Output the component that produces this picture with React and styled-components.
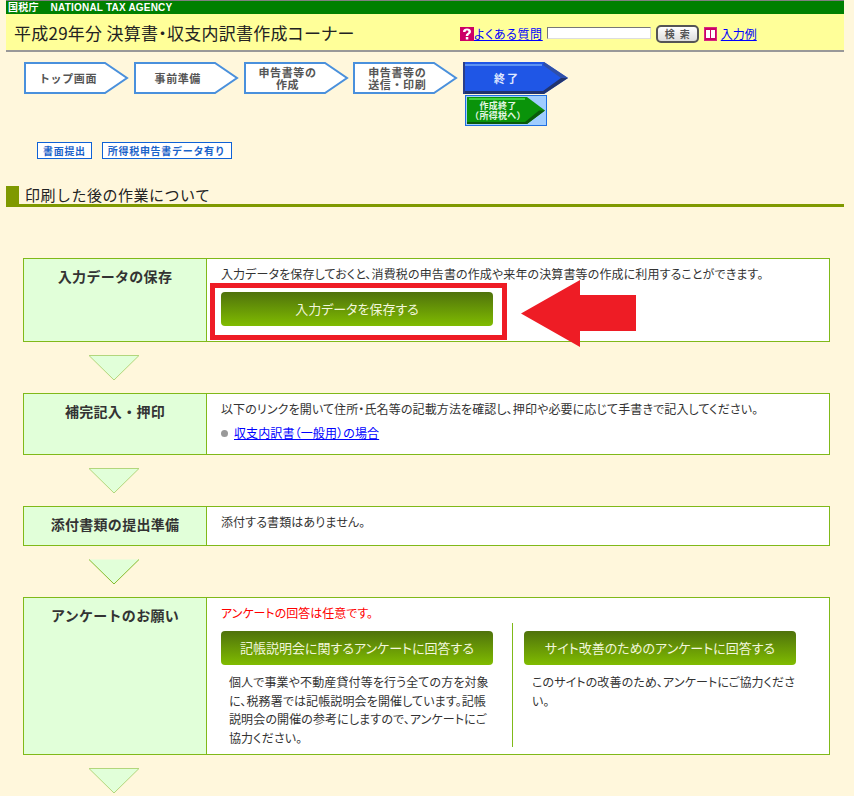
import React from 'react';
import styled, { createGlobalStyle } from 'styled-components';

const GlobalStyle = createGlobalStyle`
  html, body {
    margin: 0;
    padding: 0;
    background: #fff7dc;
  }
  body {
    font-family: "Noto Sans CJK JP", "Liberation Sans", sans-serif;
    color: #333;
    font-size: 12px;
  }
  a {
    color: #0000ff;
  }
`;

const Page = styled.div`
  width: 854px;
  height: 796px;
  overflow: hidden;
  box-sizing: border-box;
  padding-left: 6px;
  padding-right: 10px;
  font-feature-settings: "palt";
`;

const AgencyBar = styled.div`
  height: 13px;
  border-top: 1px solid #808080;
  background: #008000;
  color: #fff;
  font-size: 10px;
  font-weight: 700;
  line-height: 13px;
  letter-spacing: 0.2px;
  display: flex;
  gap: 12px;
  padding-left: 2px;
  font-family: "Liberation Sans", "Noto Sans CJK JP", sans-serif;
  font-feature-settings: normal;
`;

const TitleBar = styled.div`
  height: 36px;
  background: #ffff99;
  border-bottom: 2px solid #999;
  display: flex;
  align-items: center;
`;

const Title = styled.h1`
  margin: 0 0 0 8px;
  width: 446px;
  font-size: 17px;
  font-weight: 400;
  letter-spacing: 0.25px;
  color: #222;
  white-space: nowrap;
`;

const Tools = styled.div`
  display: flex;
  align-items: center;
  margin-top: 4px;
  font-size: 12px;
`;

const HelpLink = styled.a`
  margin-top: -2px;
  text-decoration: underline;
  white-space: nowrap;
  letter-spacing: ${p => p.$spacing || 0}px;
`;

const SearchBox = styled.input`
  width: 102px;
  height: 10px;
  margin: -2px 5px 0 4px;
  padding: 0;
  border: 1px solid;
  border-color: #777 #ddd #ddd #777;
  background: #fff;
`;

const SearchButton = styled.button`
  width: 43px;
  height: 18px;
  padding: 0 0 0 5px;
  margin-right: 5px;
  border: 2px solid #555;
  border-radius: 5px;
  background: linear-gradient(#fff, #ddd);
  color: #555;
  font-family: inherit;
  font-size: 10px;
  font-weight: 700;
  letter-spacing: 5px;
  line-height: 12px;
`;

const StepNav = styled.nav`
  display: grid;
  grid-template-columns: repeat(5, 105px);
  column-gap: 4.75px;
  padding: 10px 0 0 18px;
  height: 64px;
`;

const StepColumn = styled.div`
  display: flex;
  flex-direction: column;
  align-items: flex-start;
`;

const StepLabel = styled.span`
  position: absolute;
  left: 0;
  top: 0;
  width: ${p => p.$width}px;
  height: 100%;
  display: flex;
  align-items: center;
  justify-content: center;
  text-align: center;
  font-size: ${p => p.$size || 11}px;
  line-height: ${p => p.$leading || 12}px;
  font-weight: 700;
  letter-spacing: ${p => p.$spacing ?? 0.6}px;
  color: ${p => p.$color || '#555'};
  font-feature-settings: normal;
`;

const StepShape = styled.div`
  position: relative;
  width: ${p => p.$width}px;
  height: ${p => p.$height}px;
  flex: none;
`;

const ShapeSvg = styled.svg`
  display: block;
`;

function Step({ children }) {
  return (
    <StepShape $width={105} $height={32}>
      <ShapeSvg width="105" height="32" viewBox="0 0 105 32">
        <path d="M1 1H81L103 16L81 31H1Z" fill="#fff" stroke="#4a90dc" strokeWidth="2" />
      </ShapeSvg>
      <StepLabel $width={88}>{children}</StepLabel>
    </StepShape>
  );
}

function CurrentStep() {
  return (
    <StepShape $width={105} $height={32}>
      <ShapeSvg width="105" height="32" viewBox="0 0 105 32">
        <path d="M0 0H81L105 16L81 32H0Z" fill="#1f56e6" />
        <path d="M81 32L105 16L98 16L80 29H0V32Z" fill="#22346e" />
        <path d="M81 0L105 16L98 16L80 3Z" fill="#2f4fa8" />
        <path d="M2 2H79V4H2Z" fill="#5c92f2" />
        <path d="M0 0H2V32H0Z" fill="#2a3f8a" />
      </ShapeSvg>
      <StepLabel $width={88} $color="#dfe8ff" $spacing={2}>終了</StepLabel>
    </StepShape>
  );
}

const SubStepFrame = styled(StepShape)`
  margin-left: 2px;
  margin-top: 1px;
  box-sizing: border-box;
  border: 1px solid #1f6fe0;
  background: #a0cdff;
`;

function SubStep() {
  return (
    <SubStepFrame $width={82} $height={31}>
      <ShapeSvg width="80" height="29" viewBox="0 0 80 29">
        <path d="M1 1H61L79 14.5L61 28H1Z" fill="#0a930a" />
        <path d="M61 28L79 14.5L73 14.5L59 26H1V28Z" fill="#0a5a0a" />
        <path d="M3 2H59V4H3Z" fill="#3fd23f" />
      </ShapeSvg>
      <StepLabel $width={64} $size={9} $leading={10} $color="#e4f6e4" $spacing={0.3}>
        作成終了<br />（所得税へ）
      </StepLabel>
    </SubStepFrame>
  );
}

const TagRow = styled.div`
  display: flex;
  gap: 10px;
  padding: 16px 0 0 31px;
`;

const Tag = styled.span`
  height: 15px;
  padding: 0 5px;
  border: 1px solid #0f62d6;
  background: #fff;
  color: #1b63c9;
  font-size: 10px;
  font-weight: 700;
  line-height: 15px;
  letter-spacing: 0.7px;
  font-feature-settings: normal;
`;

const SectionHeading = styled.h2`
  margin: 27px 0 0;
  height: 18px;
  border-left: 13px solid #7f9900;
  border-bottom: 3px solid #7f9900;
  padding-left: 6px;
  font-size: 15px;
  font-weight: 400;
  line-height: 17px;
  letter-spacing: 0.5px;
  color: #222;
  font-feature-settings: normal;
`;

const Flow = styled.div`
  margin: 51px 0 0 17px;
  width: 807px;
  display: flex;
  flex-direction: column;
`;

const Card = styled.section`
  display: grid;
  grid-template-columns: 183px 1fr;
  min-height: ${p => p.$height}px;
  box-sizing: border-box;
  border: 1px solid #80b919;
  background: #fff;
`;

const CardLabel = styled.h3`
  margin: 0;
  padding-top: 7px;
  background: #e1ffd9;
  border-right: 1px solid #80b919;
  text-align: center;
  font-size: 14px;
  line-height: 20px;
  font-weight: 700;
  letter-spacing: 0.3px;
  color: #333;
  font-feature-settings: normal;
`;

const CardBody = styled.div`
  position: relative;
  padding: 6px 14px 0;
  line-height: 18px;
  letter-spacing: 0.12px;
`;

const Notice = styled.p`
  margin: 0 0 1px;
  color: #f00;
  letter-spacing: 0;
`;

const Paragraph = styled.p`
  margin: 0;
`;

const GreenButton = styled.a`
  display: flex;
  align-items: center;
  justify-content: center;
  width: 272px;
  height: 34px;
  border-radius: 4px;
  background: linear-gradient(#4f720c, #80bc00);
  color: #f2f7dc;
  font-size: 13px;
  letter-spacing: 0;
  text-decoration: none;
  white-space: nowrap;
`;

const HighlightBox = styled.div`
  position: absolute;
  left: 3px;
  top: 24px;
  width: 297px;
  height: 57px;
  box-sizing: border-box;
  border: 5px solid #ee1c25;
`;

const SaveButton = styled(GreenButton)`
  margin-top: 9px;
`;

const RedArrow = styled.svg`
  position: absolute;
  left: 314px;
  top: 21px;
`;

const LinkRow = styled.div`
  display: flex;
  align-items: center;
  gap: 6px;
  margin-top: 6px;
`;

const Bullet = styled.span`
  width: 7px;
  height: 7px;
  border-radius: 50%;
  background: #999;
`;

const SurveyGrid = styled.div`
  display: grid;
  grid-template-columns: 292px 1fr;
`;

const SurveyColumn = styled.div`
  box-sizing: border-box;
  height: 124px;
  padding: 8px 0 0 ${p => p.$indent}px;
  ${p => p.$divided && 'border-right: 1px solid #80b919;'}
`;

const SurveyText = styled.p`
  margin: 8px 0 0;
  padding-left: 8px;
  width: 264px;
  line-height: 18.6px;
`;

const ArrowSlot = styled.div`
  height: 26px;
  padding: 13px 0 12px 65px;
  svg {
    display: block;
  }
`;

function DownArrow({ strong, open }) {
  return (
    <ArrowSlot>
      <svg width="52" height="26" viewBox="0 0 52 26">
        <path d="M1 0.5H51L26 25Z" fill="#e1ffd9" stroke="none" />
        <path
          d={open ? 'M1 0.5L26 25L51 0.5' : 'M1 0.5H51L26 25Z'}
          fill="none"
          stroke={strong ? '#86bb2e' : '#b2d67c'}
          strokeWidth="1"
        />
      </svg>
    </ArrowSlot>
  );
}

const IconSvg = styled.svg`
  flex: none;
  margin-right: ${p => p.$gap || 0}px;
`;

const QuestionIcon = () => (
  <IconSvg width="14" height="14" viewBox="0 0 14 14">
    <rect width="14" height="14" fill="#cc0066" />
    <path d="M3 5C3 2.3 4.8 1.5 7 1.5C9.3 1.5 11 2.7 11 4.7C11 7 8.3 7 8.3 9H5.8C5.8 6 8.5 6 8.5 4.7C8.5 4 7.9 3.5 7 3.5C6.1 3.5 5.5 4.1 5.5 5Z" fill="#fff" />
    <rect x="5.8" y="10" width="2.5" height="2.5" fill="#fff" />
  </IconSvg>
);

const BookIcon = () => (
  <IconSvg $gap={4} width="13" height="14" viewBox="0 0 13 14">
    <rect width="13" height="14" fill="#d6287e" />
    <rect x="1" y="1" width="11" height="12" fill="#cc0066" />
    <rect x="2" y="3" width="4" height="8" fill="#fff" />
    <rect x="7" y="3" width="4" height="8" fill="#fff" />
  </IconSvg>
);

export default function App() {
  return (
    <>
      <GlobalStyle />
      <Page>
        <AgencyBar>
          <span>国税庁</span>
          <span>NATIONAL TAX AGENCY</span>
        </AgencyBar>
        <TitleBar>
          <Title>平成29年分 決算書・収支内訳書作成コーナー</Title>
          <Tools>
            <QuestionIcon />
            <HelpLink href="#" $spacing={0.6}>よくある質問</HelpLink>
            <SearchBox type="text" />
            <SearchButton>検索</SearchButton>
            <BookIcon />
            <HelpLink href="#">入力例</HelpLink>
          </Tools>
        </TitleBar>

        <StepNav>
          <Step>トップ画面</Step>
          <Step>事前準備</Step>
          <Step>申告書等の<br />作成</Step>
          <Step>申告書等の<br />送信・印刷</Step>
          <StepColumn>
            <CurrentStep />
            <SubStep />
          </StepColumn>
        </StepNav>

        <TagRow>
          <Tag>書面提出</Tag>
          <Tag>所得税申告書データ有り</Tag>
        </TagRow>

        <SectionHeading>印刷した後の作業について</SectionHeading>

        <Flow>
          <Card $height={84}>
            <CardLabel>入力データの保存</CardLabel>
            <CardBody>
              <Paragraph>入力データを保存しておくと、消費税の申告書の作成や来年の決算書等の作成に利用することができます。</Paragraph>
              <SaveButton href="#">入力データを保存する</SaveButton>
              <HighlightBox />
              <RedArrow width="116" height="67" viewBox="0 0 116 67">
                <path d="M0 33.5L59 0V15H115V51H59V67Z" fill="#ee1c25" />
              </RedArrow>
            </CardBody>
          </Card>
          <DownArrow />

          <Card $height={62}>
            <CardLabel>補完記入・押印</CardLabel>
            <CardBody>
              <Paragraph>以下のリンクを開いて住所・氏名等の記載方法を確認し、押印や必要に応じて手書きで記入してください。</Paragraph>
              <LinkRow>
                <Bullet />
                <a href="#">収支内訳書（一般用）の場合</a>
              </LinkRow>
            </CardBody>
          </Card>
          <DownArrow />

          <Card $height={40}>
            <CardLabel>添付書類の提出準備</CardLabel>
            <CardBody>
              <Paragraph>添付する書類はありません。</Paragraph>
            </CardBody>
          </Card>
          <DownArrow strong open />

          <Card $height={158}>
            <CardLabel>アンケートのお願い</CardLabel>
            <CardBody>
              <Notice>アンケートの回答は任意です。</Notice>
              <SurveyGrid>
                <SurveyColumn $divided $indent={0}>
                  <GreenButton href="#">記帳説明会に関するアンケートに回答する</GreenButton>
                  <SurveyText>個人で事業や不動産貸付等を行う全ての方を対象に、税務署では記帳説明会を開催しています。記帳説明会の開催の参考にしますので、アンケートにご協力ください。</SurveyText>
                </SurveyColumn>
                <SurveyColumn $indent={11}>
                  <GreenButton href="#">サイト改善のためのアンケートに回答する</GreenButton>
                  <SurveyText>このサイトの改善のため、アンケートにご協力ください。</SurveyText>
                </SurveyColumn>
              </SurveyGrid>
            </CardBody>
          </Card>
          <DownArrow />
        </Flow>
      </Page>
    </>
  );
}
